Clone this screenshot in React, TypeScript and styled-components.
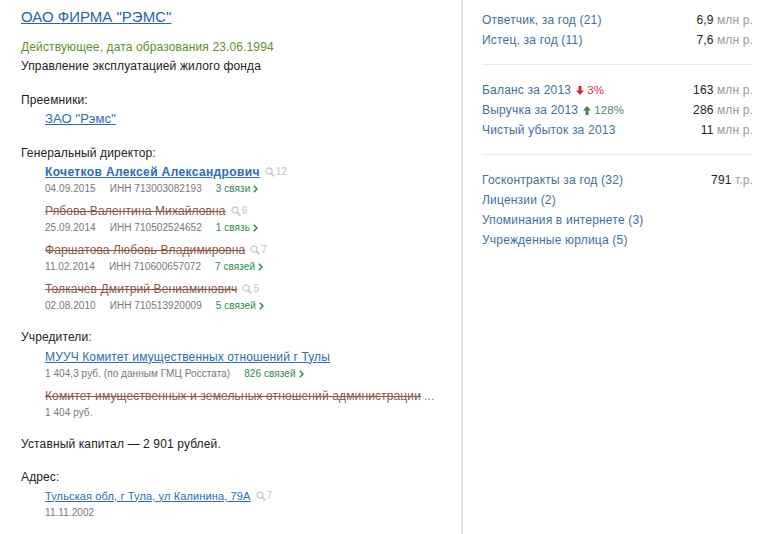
import React from "react";
import styled, { createGlobalStyle } from "styled-components";

const GlobalStyle = createGlobalStyle`
  html, body {
    margin: 0;
    padding: 0;
    background: #fff;
  }
  body {
    font-family: "Liberation Sans", Arial, sans-serif;
    font-size: 12px;
    letter-spacing: 0.13px;
    color: #222;
  }
`;

const Page = styled.div`
  display: flex;
  width: 770px;
  height: 534px;
  overflow: hidden;
`;

const Main = styled.div`
  width: 463px;
  box-sizing: border-box;
  padding: 8px 0 0 21px;
  border-right: 2px solid #e6e6e6;
  flex: none;
`;

const Side = styled.div`
  width: 271px;
  margin-left: 19px;
  padding-top: 10px;
`;

const Title = styled.a`
  display: inline-block;
  font-size: 15px;
  letter-spacing: 0;
  line-height: 18px;
  color: #2a63a8;
  text-decoration: underline;
`;

const Status = styled.div`
  margin-top: 12px;
  line-height: 18px;
  color: #5f8f2e;
`;

const Plain = styled.div<{ $top?: number }>`
  margin-top: ${(p) => p.$top ?? 0}px;
  line-height: 18px;
  color: #222;
`;

const Indent = styled.div`
  padding-left: 24px;
`;

const PersonLink = styled.a<{ $bold?: boolean; $size?: number }>`
  color: #2a6cb5;
  text-decoration: underline;
  font-weight: ${(p) => (p.$bold ? 700 : 400)};
  font-size: ${(p) => p.$size ?? 12}px;
  letter-spacing: ${(p) => (p.$bold ? 0.37 : 0.13)}px;
`;

const Struck = styled.span`
  color: #8a5a48;
  text-decoration: line-through;
`;

const Entry = styled.div<{ $top?: number }>`
  display: flex;
  align-items: center;
  height: 19px;
  margin-top: ${(p) => p.$top ?? 0}px;
  white-space: nowrap;
`;

const Ellipsis = styled.span`
  margin-left: 3px;
  color: #777;
`;

const Hits = styled.span`
  display: inline-flex;
  align-items: center;
  gap: 1px;
  margin-left: 5px;
  font-size: 10px;
  line-height: 12px;
  color: #c4c4c4;
  svg {
    display: block;
  }
`;

const Meta = styled.div`
  display: flex;
  gap: 14px;
  padding-top: 1px;
  font-size: 10px;
  letter-spacing: 0.06px;
  line-height: 13px;
  color: #777;
`;

const Connections = styled.span`
  display: inline-flex;
  align-items: center;
  gap: 3px;
  color: #2c8a4e;
`;

const Row = styled.div`
  display: flex;
  justify-content: space-between;
  line-height: 20px;
`;

const RowLabel = styled.span`
  color: #41709f;
  letter-spacing: 0.2px;
`;

const Amount = styled.span`
  color: #222;
`;

const Unit = styled.span`
  color: #999;
`;

const Trend = styled.span<{ $up?: boolean }>`
  display: inline-flex;
  align-items: center;
  gap: 3px;
  margin-left: 5px;
  color: ${(p) => (p.$up ? "#4f8a70" : "#e0303a")};
  font-size: 11.5px;
  vertical-align: top;
`;

const Divider = styled.div`
  height: 1px;
  margin: 14px 0 15px;
  background: #e8e8e8;
`;

const SearchIcon = () => (
  <svg width="10" height="10" viewBox="0 0 10 10" fill="none" stroke="#c9c9c9">
    <circle cx="4" cy="4" r="3" strokeWidth="1.3" />
    <path d="M6.2 6.2 9.3 9.3" strokeWidth="1.8" />
  </svg>
);

const Chevron = () => (
  <svg width="5" height="8" viewBox="0 0 5 8" fill="none" stroke="#2c8a4e" strokeWidth="1.5">
    <path d="M.8.8 4 4 .8 7.2" />
  </svg>
);

const Arrow = ({ up }: { up?: boolean }) => (
  <svg width="8" height="9" viewBox="0 0 8 9" fill={up ? "#3f8268" : "#e0202c"}>
    <path d={up ? "M4 0 8 4.5H5.5V9h-3V4.5H0Z" : "M4 9 0 4.5h2.5V0h3v4.5H8Z"} />
  </svg>
);

const directors = [
  { name: "Кочетков Алексей Александрович", hits: 12, date: "04.09.2015", inn: "713003082193", links: "3 связи", active: true },
  { name: "Рябова Валентина Михайловна", hits: 6, date: "25.09.2014", inn: "710502524652", links: "1 связь" },
  { name: "Фаршатова Любовь Владимировна", hits: 7, date: "11.02.2014", inn: "710600657072", links: "7 связей" },
  { name: "Толкачев Дмитрий Вениаминович", hits: 5, date: "02.08.2010", inn: "710513920009", links: "5 связей" },
];

const App = () => (
  <Page>
    <GlobalStyle />
    <Main>
      <Title>ОАО ФИРМА "РЭМС"</Title>
      <Status>Действующее, дата образования 23.06.1994</Status>
      <Plain $top={1}>Управление эксплуатацией жилого фонда</Plain>

      <Plain $top={16}>Преемники:</Plain>
      <Indent>
        <Entry>
          <PersonLink $size={13}>ЗАО "Рэмс"</PersonLink>
        </Entry>
      </Indent>

      <Plain $top={16}>Генеральный директор:</Plain>
      <Indent>
        {directors.map((d, i) => (
          <div key={d.inn}>
            <Entry $top={i === 0 ? 0 : 6}>
              {d.active ? <PersonLink $bold>{d.name}</PersonLink> : <Struck>{d.name}</Struck>}
              <Hits>
                <SearchIcon />
                {d.hits}
              </Hits>
            </Entry>
            <Meta>
              <span>{d.date}</span>
              <span>ИНН {d.inn}</span>
              <Connections>
                {d.links}
                <Chevron />
              </Connections>
            </Meta>
          </div>
        ))}
      </Indent>

      <Plain $top={16}>Учредители:</Plain>
      <Indent>
        <Entry $top={1}>
          <PersonLink>МУУЧ Комитет имущественных отношений г Тулы</PersonLink>
        </Entry>
        <Meta>
          <span>1 404,3 руб. (по данным ГМЦ Росстата)</span>
          <Connections>
            826 связей
            <Chevron />
          </Connections>
        </Meta>
        <Entry $top={6}>
          <Struck>Комитет имущественных и земельных отношений администрации</Struck>
          <Ellipsis>...</Ellipsis>
        </Entry>
        <Meta>
          <span>1 404 руб.</span>
        </Meta>
      </Indent>

      <Plain $top={16}>Уставный капитал — 2 901 рублей.</Plain>

      <Plain $top={15}>Адрес:</Plain>
      <Indent>
        <Entry>
          <PersonLink $size={11}>Тульская обл, г Тула, ул Калинина, 79А</PersonLink>
          <Hits>
            <SearchIcon />7
          </Hits>
        </Entry>
        <Meta>
          <span>11.11.2002</span>
        </Meta>
      </Indent>
    </Main>

    <Side>
      <Row>
        <RowLabel>Ответчик, за год (21)</RowLabel>
        <span><Amount>6,9</Amount> <Unit>млн р.</Unit></span>
      </Row>
      <Row>
        <RowLabel>Истец, за год (11)</RowLabel>
        <span><Amount>7,6</Amount> <Unit>млн р.</Unit></span>
      </Row>
      <Divider />
      <Row>
        <span>
          <RowLabel>Баланс за 2013</RowLabel>
          <Trend><Arrow />3%</Trend>
        </span>
        <span><Amount>163</Amount> <Unit>млн р.</Unit></span>
      </Row>
      <Row>
        <span>
          <RowLabel>Выручка за 2013</RowLabel>
          <Trend $up><Arrow up />128%</Trend>
        </span>
        <span><Amount>286</Amount> <Unit>млн р.</Unit></span>
      </Row>
      <Row>
        <RowLabel>Чистый убыток за 2013</RowLabel>
        <span><Amount>11</Amount> <Unit>млн р.</Unit></span>
      </Row>
      <Divider />
      <Row>
        <RowLabel>Госконтракты за год (32)</RowLabel>
        <span><Amount>791</Amount> <Unit>т.р.</Unit></span>
      </Row>
      <Row>
        <RowLabel>Лицензии (2)</RowLabel>
      </Row>
      <Row>
        <RowLabel>Упоминания в интернете (3)</RowLabel>
      </Row>
      <Row>
        <RowLabel>Учрежденные юрлица (5)</RowLabel>
      </Row>
    </Side>
  </Page>
);

export default App;
